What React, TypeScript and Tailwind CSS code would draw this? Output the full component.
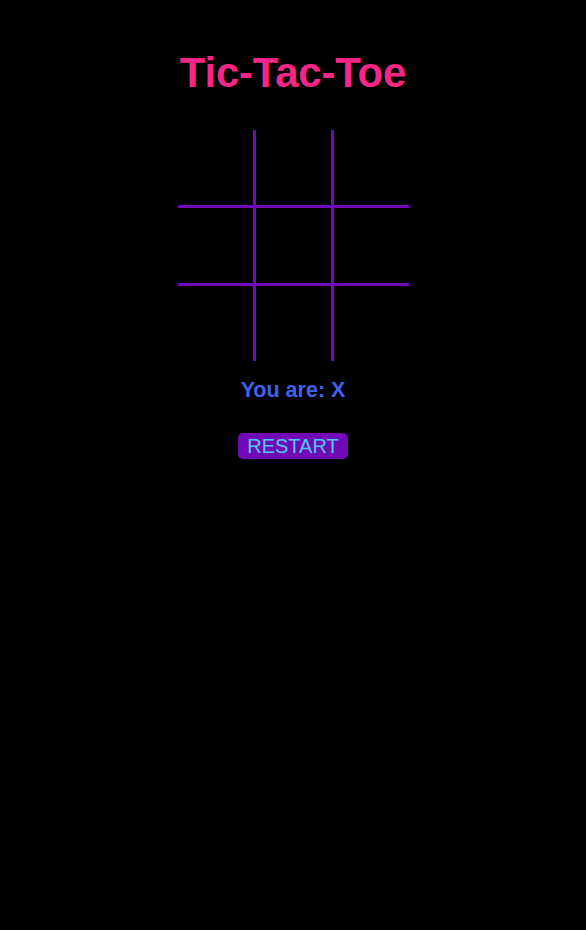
import { useState } from "react";

const FONT = { fontFamily: '"Liberation Sans", Arial, sans-serif' };

export default function App() {
  const [cells, setCells] = useState<string[]>(Array(9).fill(""));

  return (
    <div className="min-h-[930px] w-full bg-black flex flex-col items-center pt-[49px]" style={FONT}>
      <h1 className="text-[42px] leading-[48px] font-bold text-[#f72585] tracking-[-0.2px]">
        Tic-Tac-Toe
      </h1>
      <div className="mt-[33px] grid grid-cols-3 gap-[3px] bg-[#7209b7]">
        {cells.map((c, i) => (
          <div
            key={`cell-${i}`}
            className="w-[75px] h-[75px] bg-black flex items-center justify-center text-5xl text-[#4cc9f0]"
            onClick={() => {
              if (c) return;
              const next = [...cells];
              next[i] = "X";
              setCells(next);
            }}
          >
            {c}
          </div>
        ))}
      </div>
      <p className="mt-[16px] text-[21.5px] leading-[26px] font-bold text-[#4361ee]">You are: X</p>
      <button
        className="mt-[30px] h-[26px] px-[9px] rounded-[5px] bg-[#7209b7] text-[20px] leading-[24px] text-[#4cc9f0]"
        onClick={() => setCells(Array(9).fill(""))}
      >
        RESTART
      </button>
    </div>
  );
}
